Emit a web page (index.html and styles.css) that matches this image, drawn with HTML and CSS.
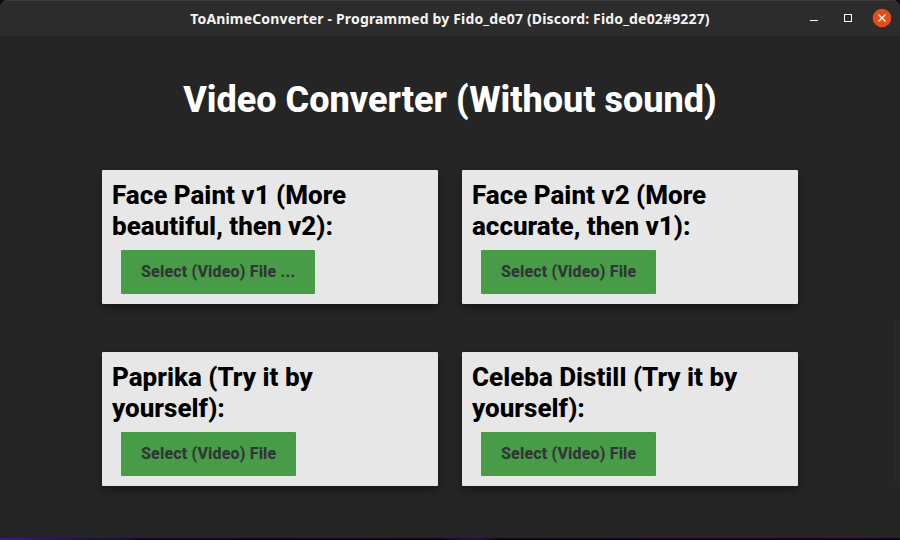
FILE: index.html
```html
<!DOCTYPE html>
<html lang="en">
<head>
<meta charset="utf-8">
<title>ToAnimeConverter</title>
<link rel="stylesheet" href="styles.css">
</head>
<body>
<div class="window">
  <header class="titlebar">
    <div class="caption">ToAnimeConverter - Programmed by Fido_de07 (Discord: Fido_de02#9227)</div>
    <svg class="controls" width="84" height="20" viewBox="0 0 84 20">
      <path d="M2 12.500h8" stroke="#fff" fill="none"/>
      <rect x="36.500" y="6.500" width="7" height="7" stroke="#fff" fill="none"/>
      <circle cx="74" cy="10" r="9.300" fill="#e44d1b"/>
      <path d="M70.500 6.500l7 7m0-7l-7 7" stroke="#fff" stroke-width="1.300" fill="none"/>
    </svg>
  </header>
  <main class="content">
    <h1>Video Converter (Without sound)</h1>
    <div class="grid">
      <section class="card"><h2>Face Paint v1 (More beautiful, then v2):</h2><button>Select (Video) File ...</button></section>
      <section class="card"><h2>Face Paint v2 (More accurate, then v1):</h2><button>Select (Video) File</button></section>
      <section class="card"><h2>Paprika (Try it by yourself):</h2><button>Select (Video) File</button></section>
      <section class="card"><h2>Celeba Distill (Try it by yourself):</h2><button>Select (Video) File</button></section>
    </div>
  </main>
  <div class="scrollbar"></div>
  <footer class="desktop-edge"></footer>
</div>
</body>
</html>
```
FILE: styles.css
```css
* { box-sizing: border-box; }
body { margin: 0; background: #10051c; font-family: Roboto, sans-serif; }
.window { position: relative; display: flex; flex-direction: column; height: 540px; background: #252525; border-radius: 7px 7px 0 0; overflow: hidden; }
.titlebar { height: 36px; flex: none; display: grid; grid-template-columns: 84px 1fr 84px; padding: 0 8px; align-items: center; background: #2c2c2c; box-shadow: inset 0 1px #3b3b3b; }
.caption { grid-column: 2; text-align: center; white-space: nowrap; color: #f5f5f3; font: 700 14px "Noto Sans", sans-serif; letter-spacing: .16px; }
.content { flex: 1; }
h1 { margin: 43px 0 48px; text-align: center; color: #fff; font-size: 36px; line-height: 43px; font-weight: 800; }
.grid { width: 696px; margin: 0 auto; display: grid; grid-template-columns: 336px 336px; gap: 48px 24px; }
.card { height: 134px; padding: 10px; background: #e7e7e7; border-radius: 1px; box-shadow: 0 4px 10px rgba(0,0,0,.4); }
h2 { margin: 0 0 8px; font-size: 26px; line-height: 31px; font-weight: 800; color: #000; }
button { display: block; height: 44px; margin-left: 9px; padding: 0 20px 1px; border: 0; border-radius: 1px; background: #489b47; color: #303638; font: 800 16px Roboto, sans-serif; letter-spacing: .16px; }
.scrollbar { position: absolute; right: -1px; top: 320px; width: 6px; height: 164px; border: 1px solid #2a2a2a; border-radius: 2px; background: #262626; }
.desktop-edge { height: 2px; background: linear-gradient(90deg, #391aa0 0, #241064 60px, #160b3b 130px, #16042b 140px, #130020 430px, #210c55 475px, #180020 500px, #16002c); }
```
